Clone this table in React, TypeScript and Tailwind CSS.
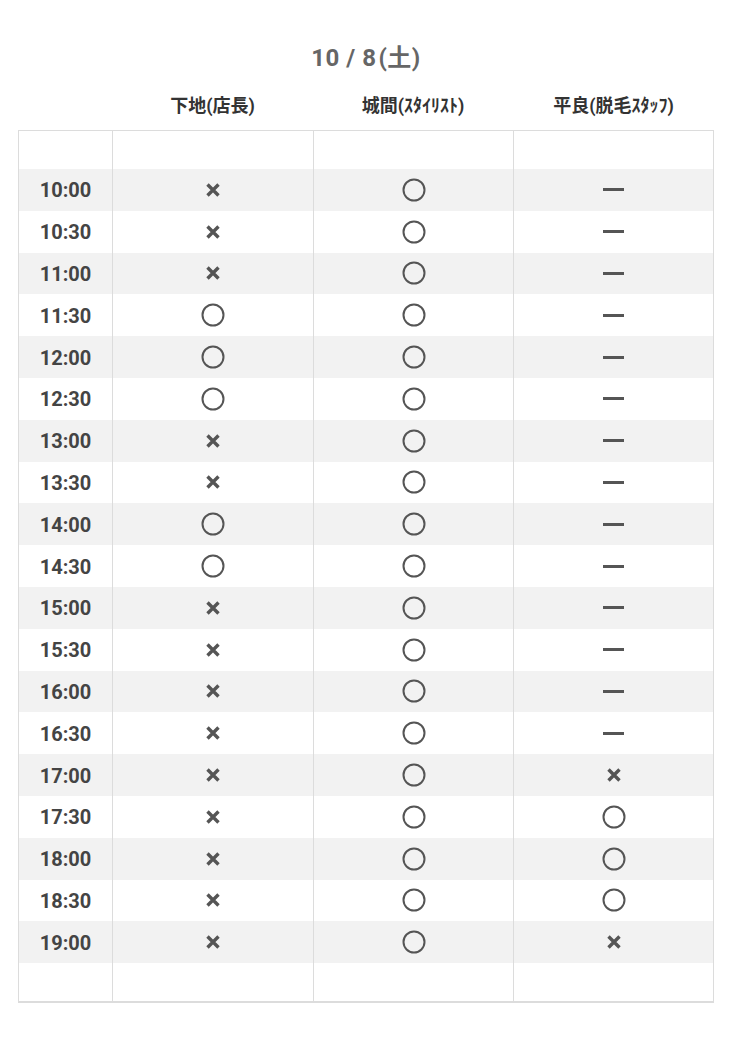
type Mark = 'x' | 'o' | '-'

const times = [
  '10:00', '10:30', '11:00', '11:30', '12:00', '12:30', '13:00', '13:30', '14:00', '14:30',
  '15:00', '15:30', '16:00', '16:30', '17:00', '17:30', '18:00', '18:30', '19:00',
]

// 下地 / 城間 / 平良
const col1: Mark[] = ['x', 'x', 'x', 'o', 'o', 'o', 'x', 'x', 'o', 'o', 'x', 'x', 'x', 'x', 'x', 'x', 'x', 'x', 'x']
const col2: Mark[] = times.map(() => 'o')
const col3: Mark[] = [
  '-', '-', '-', '-', '-', '-', '-', '-', '-', '-', '-', '-', '-', '-', 'x', 'o', 'o', 'o', 'x',
]

const staff = ['下地(店長)', '城間(ｽﾀｲﾘｽﾄ)', '平良(脱毛ｽﾀｯﾌ)']

function MarkIcon({ type }: { type: Mark }) {
  if (type === 'o') {
    return (
      <svg width="24" height="24" viewBox="0 0 24 24" fill="none">
        <circle cx="12" cy="12" r="10.5" stroke="#555" strokeWidth="2" />
      </svg>
    )
  }
  if (type === 'x') {
    return (
      <svg width="16" height="16" viewBox="0 0 16 16" fill="none">
        <path d="M2.5 2.5l11 11M13.5 2.5l-11 11" stroke="#555" strokeWidth="3.4" />
      </svg>
    )
  }
  return <div className="w-[21px] h-[3px] bg-[#555]" />
}

export default function App() {
  return (
    <div
      className="w-[750px] min-h-[1049px] bg-white pt-[40px]"
      style={{ fontFamily: 'Roboto, "Noto Sans CJK JP", sans-serif' }}
    >
      <div className="ml-[18px] w-[696px]">
        <h1 className="text-center text-[24px] font-bold text-[#666] leading-[36px] tracking-[0.5px]">
          10 / 8<span className="ml-[2px]">(</span>土<span>)</span>
        </h1>

        <div className="flex h-[54px] items-center pt-[4px]">
          <div className="w-[94px]" />
          {staff.map((s, i) => (
            <div
              key={s}
              className={`${i === 1 ? 'w-[200px]' : 'w-[201px]'} text-center text-[18px] font-bold text-[#333]`}
            >
              {s}
            </div>
          ))}
        </div>

        <div className="border border-[#dcdcdc] border-b-2">
          <div className="flex h-[38px]">
            <div className="w-[94px] border-r border-[#dcdcdc]" />
            <div className="w-[201px] border-r border-[#dcdcdc]" />
            <div className="w-[200px] border-r border-[#dcdcdc]" />
            <div className="flex-1" />
          </div>

          {times.map((t, i) => (
            <div key={t} className={`flex h-[41.8px] ${i % 2 === 0 ? 'bg-[#f2f2f2]' : 'bg-white'}`}>
              <div className="w-[94px] border-r border-[#dcdcdc] flex items-center justify-center pt-[1px] text-[20px] font-bold text-[#444]">
                {t}
              </div>
              <div className="w-[201px] border-r border-[#dcdcdc] flex items-center justify-center">
                <MarkIcon type={col1[i]} />
              </div>
              <div className="w-[200px] border-r border-[#dcdcdc] flex items-center justify-center">
                <MarkIcon type={col2[i]} />
              </div>
              <div className="flex-1 flex items-center justify-center">
                <MarkIcon type={col3[i]} />
              </div>
            </div>
          ))}

          <div className="flex h-[38px]">
            <div className="w-[94px] border-r border-[#dcdcdc]" />
            <div className="w-[201px] border-r border-[#dcdcdc]" />
            <div className="w-[200px] border-r border-[#dcdcdc]" />
            <div className="flex-1" />
          </div>
        </div>
      </div>
    </div>
  )
}
